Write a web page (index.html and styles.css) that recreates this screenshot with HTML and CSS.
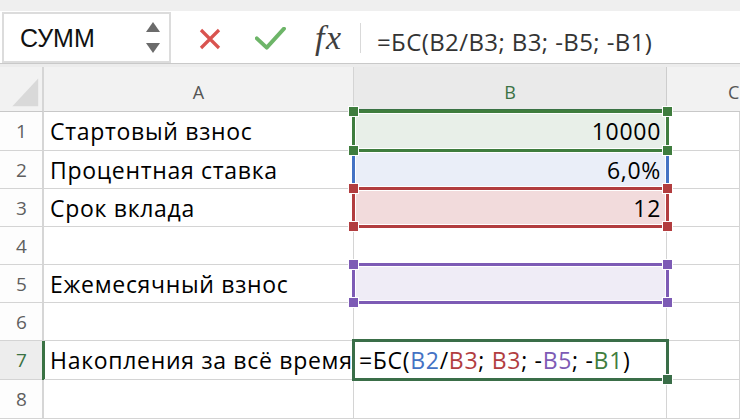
FILE: index.html
```html
<!DOCTYPE html>
<html lang="ru">
<head>
<meta charset="utf-8">
<title>БС</title>
<link rel="stylesheet" href="styles.css">
</head>
<body>
<div class="top"></div>
<div class="fbar">
  <div class="namebox">
    <span class="nb-text">СУММ</span>
    <span class="spin">
      <svg width="14" height="10" viewBox="0 0 14 10"><polygon points="7,0 14,10 0,10"/></svg>
      <svg width="14" height="10" viewBox="0 0 14 10"><polygon points="0,0 14,0 7,10"/></svg>
    </span>
  </div>
  <svg class="ic-x" width="22" height="22" viewBox="0 0 22 22"><path d="M2 2 L20 20 M20 2 L2 20"/></svg>
  <svg class="ic-ok" width="31" height="23" viewBox="0 0 31 23"><polyline points="1.8,11.3 11.7,20.6 29,1.6"/></svg>
  <span class="fx">fx</span>
  <span class="vsep"></span>
  <span class="ftext">=БС(B2/B3; B3; -B5; -B1)</span>
</div>
<div class="fband"></div>
<div class="sheet">
  <div class="c corner"><svg width="44" height="44" viewBox="0 0 44 44"><polygon points="40,11 40,40 13,40"/></svg></div>
  <div class="c hd">A</div>
  <div class="c hd hd-sel">B</div>
  <div class="c hd hd-c">C</div>

  <div class="c rh">1</div>
  <div class="c la">Стартовый взнос</div>
  <div class="c num"><span class="rng r-green"><i class="h tl"></i><i class="h tr"></i><i class="h bl"></i><i class="h br"></i></span><span class="v">10000</span></div>
  <div class="c"></div>

  <div class="c rh">2</div>
  <div class="c la">Процентная ставка</div>
  <div class="c num"><span class="rng r-blue"></span><span class="v">6,0%</span></div>
  <div class="c"></div>

  <div class="c rh">3</div>
  <div class="c la">Срок вклада</div>
  <div class="c num"><span class="rng r-red"><i class="h tl"></i><i class="h tr"></i><i class="h bl"></i><i class="h br"></i></span><span class="v">12</span></div>
  <div class="c"></div>

  <div class="c rh">4</div>
  <div class="c la"></div>
  <div class="c"></div>
  <div class="c"></div>

  <div class="c rh">5</div>
  <div class="c la">Ежемесячный взнос</div>
  <div class="c num"><span class="rng r-purple"><i class="h tl"></i><i class="h tr"></i><i class="h bl"></i><i class="h br"></i></span></div>
  <div class="c"></div>

  <div class="c rh">6</div>
  <div class="c la"></div>
  <div class="c"></div>
  <div class="c"></div>

  <div class="c rh rh-sel">7</div>
  <div class="c la">Накопления за всё время</div>
  <div class="c edit"><span class="rng r-act"><i class="h br"></i></span><span class="v">=БС(<span class="k-blue">B2</span>/<span class="k-red">B3</span>; <span class="k-red">B3</span>; -<span class="k-purple">B5</span>; -<span class="k-green">B1</span>)</span></div>
  <div class="c"></div>

  <div class="c rh">8</div>
  <div class="c la"></div>
  <div class="c"></div>
  <div class="c"></div>
</div>
</body>
</html>
```
FILE: styles.css
```css
html, body {
  margin: 0;
  padding: 0;
  width: 740px;
  height: 420px;
  overflow: hidden;
  background: #ffffff;
  font-family: "Open Sans", "Noto Sans", sans-serif;
}

.top {
  height: 11px;
  background: #efefef;
}

.fbar {
  height: 51px;
  padding: 1px 0 0 2px;
  border-bottom: 1px solid #c9c9c9;
  display: flex;
  align-items: center;
  background: #ffffff;
}

.namebox {
  align-self: stretch;
  width: 169px;
  box-sizing: border-box;
  border: 2px solid #dcdcdc;
  display: flex;
  align-items: center;
}

.nb-text {
  flex: 1;
  padding-left: 16px;
  font-family: "Liberation Sans", Arial, sans-serif;
  font-size: 25px;
  color: #111;
  padding-top: 1px;
}

.spin {
  display: flex;
  flex-direction: column;
  gap: 11px;
  margin-right: 9px;
}

.spin svg {
  display: block;
  fill: #6b6b6b;
}

.ic-x {
  margin-left: 28px;
  margin-top: 2px;
  fill: none;
  stroke: #d9534f;
  stroke-width: 3.2;
}

.ic-ok {
  margin-left: 34px;
  margin-top: 2px;
  fill: none;
  stroke: #6db568;
  stroke-width: 3.9;
  stroke-linecap: round;
  stroke-linejoin: round;
}

.fx {
  width: 30px;
  margin-left: 29px;
  font-family: "Liberation Serif", "Times New Roman", serif;
  font-style: italic;
  font-size: 34px;
  line-height: 1;
  color: #3f3f3f;
  letter-spacing: 1.5px;
  margin-top: 1px;
}

.vsep {
  width: 1px;
  height: 30px;
  margin-left: 15px;
  background: #d9d9d9;
}

.ftext {
  margin-left: 16px;
  padding-top: 7px;
  font-size: 24px;
  letter-spacing: 0.4px;
  color: #333333;
  white-space: nowrap;
}

.fband {
  height: 3px;
  background: #ececec;
}

.sheet {
  display: grid;
  grid-template-columns: 44px 310px 313px 1fr;
  grid-template-rows: 45px 39px 38px 38px 38px 38px 38px 39px 39px;
  width: 740px;
}

.c {
  position: relative;
  box-sizing: border-box;
  border-right: 1px solid #d4d4d4;
  border-bottom: 1px solid #d4d4d4;
  display: flex;
  align-items: center;
  white-space: nowrap;
  min-width: 0;
  font-size: 23px;
  letter-spacing: 0.7px;
  color: #000000;
}

.corner {
  background: #f2f2f2;
  border-bottom-color: #c8c8c8;
  border-right: 2px solid #d6d6d6;
}

.corner svg {
  display: block;
  fill: #d9d9d9;
}

.hd {
  background: #f2f2f2;
  border-bottom-color: #c8c8c8;
  justify-content: center;
  padding-top: 5px;
  font-size: 18px;
  letter-spacing: 0;
  color: #555555;
}

.hd-c {
  justify-content: flex-start;
  padding-left: 61px;
  border-right: 0;
  overflow: hidden;
}

.hd-sel {
  background: #eaeaea;
  border-bottom: 3px solid #3a7244;
  border-right-color: #cdcdcd;
  color: #3a7244;
  padding-top: 7px;
}

.rh {
  justify-content: center;
  border-right: 2px solid #d6d6d6;
  background: #fdfdfd;
  font-size: 19px;
  letter-spacing: 0;
  color: #5f5f5f;
  padding-left: 1px;
}

.rh-sel {
  background: #ededed;
  color: #3a7244;
}

.rh-sel::after {
  content: "";
  position: absolute;
  top: 0;
  bottom: -1px;
  right: -3px;
  width: 3px;
  background: #3a7244;
}

.la {
  padding-left: 6px;
}

.num {
  justify-content: flex-end;
  padding-right: 5px;
}

.edit {
  padding-left: 5px;
}

.v {
  position: relative;
  z-index: 3;
}

.rng {
  position: absolute;
  top: -2px;
  left: -2px;
  right: -3px;
  bottom: -2px;
  border: 3px solid currentColor;
  box-shadow: inset 0 0 0 1px #ffffff;
  z-index: 2;
}

.r-green {
  color: #3f7d3e;
  background: #e8efe8;
}

.r-blue {
  color: #4472c4;
  background: #eaeef8;
  z-index: 1;
}

.r-red {
  color: #b23d3f;
  background: #f2dbdc;
}

.r-purple {
  color: #7d5bb5;
  background: #efecf6;
}

.r-act {
  color: #3a6e48;
  background: transparent;
  box-shadow: none;
}

.h {
  position: absolute;
  width: 9px;
  height: 9px;
  background: currentColor;
  box-shadow: 0 0 0 1px #ffffff;
}

.tl { top: -6px; left: -6px; }
.tr { top: -6px; right: -6px; }
.bl { bottom: -6px; left: -6px; }
.br { bottom: -6px; right: -6px; }

.k-blue { color: #4472c4; }
.k-red { color: #b23d3f; }
.k-purple { color: #7d5bb5; }
.k-green { color: #3f7d3e; }
```
